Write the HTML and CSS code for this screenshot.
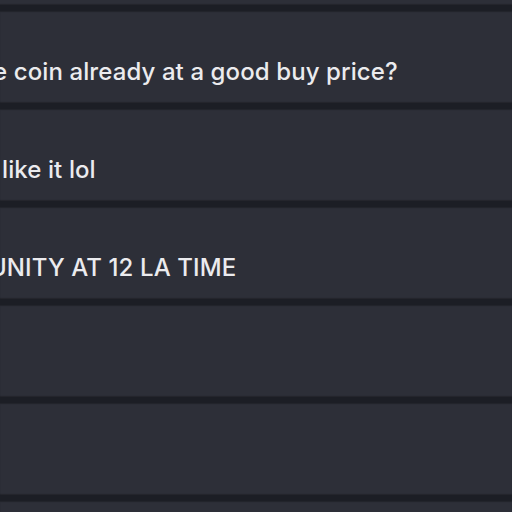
FILE: index.html
```html
<!DOCTYPE html>
<html lang="en">

<head>
    <meta charset="UTF-8">
    <meta name="viewport" content="width=device-width, initial-scale=1.0">
    <title>Comments</title>
    <link rel="stylesheet" href="styles.css">
</head>

<body>
    <div class="feed">
        <div class="post">
            <p class="post-text shift-a">e coin already at a good buy price?</p>
        </div>
        <div class="post">
            <p class="post-text shift-b">like it lol</p>
        </div>
        <div class="post">
            <p class="post-text shift-c">UNITY AT 12 LA TIME</p>
        </div>
        <div class="post"></div>
        <div class="post"></div>
        <div class="post"></div>
    </div>
</body>

</html>
```

FILE: styles.css
```css
body {
    font-family: Inter, "Noto Sans", sans-serif;
    margin: 0;
    padding: 0;
    background-color: #2d2f38;
    overflow: hidden;
}

.feed {
    display: flex;
    flex-direction: column;
    padding-top: 5px;
}

.post {
    height: 92px;
    flex-shrink: 0;
    border-top: 6px solid #1c1e25;
    background-color: #2d2f38;
    box-shadow: inset 0 1px 1px rgba(0, 0, 0, 0.25), 0 -1px 1px rgba(0, 0, 0, 0.2);
}

.post-text {
    margin: 0;
    padding-top: 47px;
    font-size: 24px;
    font-weight: 500;
    line-height: 28px;
    letter-spacing: 0.1px;
    color: #ebebee;
    white-space: nowrap;
}

/* messages are cut at the left edge of the view */
.shift-a {
    margin-left: -7px;
}

.shift-b {
    margin-left: 2px;
}

.shift-c {
    margin-left: -11px;
}
```
